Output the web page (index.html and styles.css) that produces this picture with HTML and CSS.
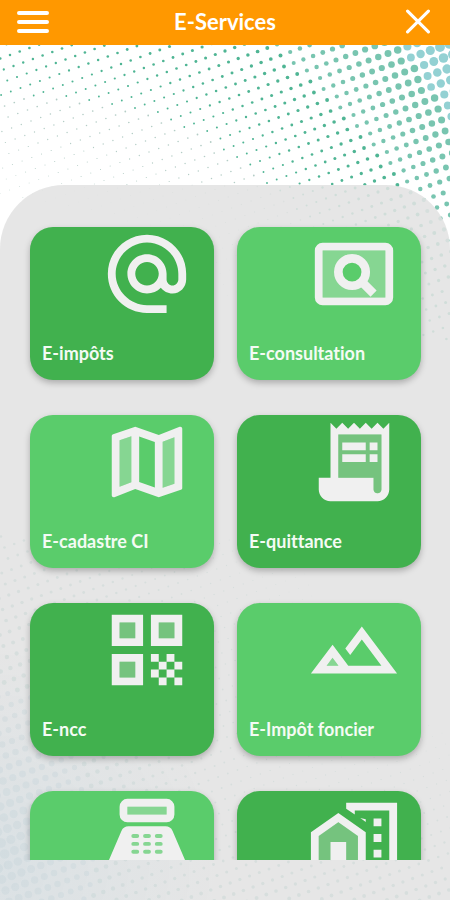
FILE: index.html
```html
<!DOCTYPE html>
<html lang="fr">
<head>
  <meta charset="UTF-8" />
  <meta name="viewport" content="width=device-width, initial-scale=1" />
  <title>E-Services</title>
  <link rel="stylesheet" href="styles.css">
</head>
<body>
  <svg id="dots" class="dots" viewBox="0 0 450 900" preserveAspectRatio="xMaxYMin slice" aria-hidden="true"></svg>

  <header class="topbar">
    <button type="button" class="icon-btn" aria-label="Menu">
      <svg class="menu-icon" viewBox="0 0 34 24"><path d="M3 3h28M3 12h28M3 21h28" /></svg>
    </button>
    <h1>E-Services</h1>
    <button type="button" class="icon-btn" aria-label="Fermer">
      <svg class="close-icon" viewBox="0 0 24 24"><path d="M2 2l20 20M22 2L2 22" /></svg>
    </button>
  </header>

  <main class="panel">
    <nav class="services">
      <a href="#" class="card dark">
        <svg class="icon" viewBox="0 0 24 24"><path d="M12 1.95c-5.52 0-10 4.48-10 10s4.48 10 10 10h5v-2h-5c-4.34 0-8-3.66-8-8s3.66-8 8-8 8 3.66 8 8v1.43c0 .79-.71 1.57-1.5 1.57s-1.5-.78-1.5-1.57v-1.43c0-2.76-2.24-5-5-5s-5 2.24-5 5 2.24 5 5 5c1.38 0 2.64-.56 3.54-1.47.65.89 1.77 1.47 2.96 1.47 1.97 0 3.5-1.6 3.5-3.57v-1.43c0-5.52-4.48-10-10-10zm0 13c-1.66 0-3-1.34-3-3s1.34-3 3-3 3 1.34 3 3-1.34 3-3 3z" /></svg>
        <span>E-impôts</span>
      </a>
      <a href="#" class="card light">
        <svg class="icon" viewBox="0 0 24 24">
          <path class="tone" fill-rule="evenodd" d="M4 6h16v12H4zM11.5 8a3.5 3.5 0 1 0 0 7 3.5 3.5 0 0 0 0-7z" />
          <path fill-rule="evenodd" d="M4 4h16a2 2 0 0 1 2 2v12a2 2 0 0 1-2 2H4a2 2 0 0 1-2-2V6a2 2 0 0 1 2-2zM4 6v12h16V6z" />
          <circle class="lens" cx="11.5" cy="11.5" r="3.5" />
          <path class="lens" d="M14 14l3 3" />
        </svg>
        <span>E-consultation</span>
      </a>
      <a href="#" class="card light">
        <svg class="icon" viewBox="0 0 24 24">
          <path class="tone" d="M5 18.31l3-1.16V5.45L5 6.46zm11 .24l3-1.01V5.7l-3 1.16z" />
          <path d="M20.5 3l-.16.03L15 5.1 9 3 3.36 4.9c-.21.07-.36.25-.36.48V20.5c0 .28.22.5.5.5l.16-.03L9 18.9l6 2.1 5.64-1.9c.21-.07.36-.25.36-.48V3.5c0-.28-.22-.5-.5-.5zM8 17.15l-3 1.16V6.46l3-1.01v11.7zm6 1.38l-4-1.4V5.47l4 1.4v11.66zm5-.99l-3 1.01V6.86l3-1.16v11.84z" />
        </svg>
        <span>E-cadastre CI</span>
      </a>
      <a href="#" class="card dark">
        <svg class="icon" viewBox="0 0 24 24">
          <path class="tone" d="M8 5v11h9v3c0 .55.45 1 1 1s1-.45 1-1V5H8z" />
          <path fill-rule="evenodd" d="M19.5 3.5L18 2l-1.5 1.5L15 2l-1.5 1.5L12 2l-1.5 1.5L9 2 7.5 3.5 6 2v14H3v3c0 1.66 1.34 3 3 3h12c1.66 0 3-1.34 3-3V2l-1.5 1.5zM19 19c0 .55-.45 1-1 1s-1-.45-1-1v-3H8V5h11v14z" />
          <path d="M9 7h6v2H9zM16 7h2v2h-2zM9 10h6v2H9zM16 10h2v2h-2z" />
        </svg>
        <span>E-quittance</span>
      </a>
      <a href="#" class="card dark">
        <svg class="icon" viewBox="0 0 24 24">
          <path class="tone" d="M5 5h4v4H5zM15 5h4v4h-4zM5 15h4v4H5z" />
          <path fill-rule="evenodd" d="M3 3h8v8H3zM5 5v4h4V5zM13 3h8v8h-8zM15 5v4h4V5zM3 13h8v8H3zM5 15v4h4v-4z" />
          <path d="M13 13h2v2h-2zM17 13h2v2h-2zM15 15h2v2h-2zM19 15h2v2h-2zM13 17h2v2h-2zM17 17h2v2h-2zM15 19h2v2h-2zM19 19h2v2h-2z" />
        </svg>
        <span>E-ncc</span>
      </a>
      <a href="#" class="card light">
        <svg class="icon" viewBox="0 0 24 24">
          <path class="tone" d="M5 16h3.04l-1.52-2.03z" />
          <path d="M14 6l-4.22 5.63 1.25 1.67L14 9.33 19 16h-8.46l-4.01-5.37L1 18h22L14 6zM5 16l1.52-2.03L8.04 16H5z" />
        </svg>
        <span>E-Impôt foncier</span>
      </a>
      <a href="#" class="card light" aria-label="Caisse">
        <svg class="icon" viewBox="0 0 24 24">
          <path class="tone" d="M7 4h10v2H7zM7.5 10.8h9v5.4h-9z" />
          <path fill-rule="evenodd" d="M7 2h10a2 2 0 0 1 2 2v2a2 2 0 0 1-2 2H7a2 2 0 0 1-2-2V4a2 2 0 0 1 2-2zM7 4v2h10V4z" />
          <path fill-rule="evenodd" d="M7.3 9h9.4a2 2 0 0 1 1.83 1.19L22.3 19v3H1.7v-3l3.77-8.81A2 2 0 0 1 7.3 9zM8.5 11a.5.5 0 0 0 0 1h1a.5.5 0 0 0 0-1zM11.5 11a.5.5 0 0 0 0 1h1a.5.5 0 0 0 0-1zM14.5 11a.5.5 0 0 0 0 1h1a.5.5 0 0 0 0-1zM8.5 13a.5.5 0 0 0 0 1h1a.5.5 0 0 0 0-1zM11.5 13a.5.5 0 0 0 0 1h1a.5.5 0 0 0 0-1zM14.5 13a.5.5 0 0 0 0 1h1a.5.5 0 0 0 0-1zM8.5 15a.5.5 0 0 0 0 1h1a.5.5 0 0 0 0-1zM11.5 15a.5.5 0 0 0 0 1h1a.5.5 0 0 0 0-1zM14.5 15a.5.5 0 0 0 0 1h1a.5.5 0 0 0 0-1z" />
        </svg>
      </a>
      <a href="#" class="card dark" aria-label="Immobilier">
        <svg class="icon" viewBox="0 0 24 24">
          <path class="tone" d="M8 8l-5 3.4V19h10v-7.6z" />
          <path d="M8 5.6l-7 4.9V21h2v-9.5l5-3.5 5 3.5V21h2V10.5zM6 13h4v8H6z" />
          <path d="M10 3v1.5l2.2 1.5V5H21v16h2V3zM13.6 6.9L15 7.9v-.7zM17 7h2v2h-2zM17 11h2v2h-2zM17 15h2v2h-2z" />
        </svg>
      </a>
    </nav>
  </main>

  <script src="script.js"></script>
</body>
</html>
```

FILE: styles.css
```css
* {
  box-sizing: border-box;
}

body {
  margin: 0;
  height: 100vh;
  display: flex;
  flex-direction: column;
  background: #fff;
  font-family: Lato, "Open Sans", sans-serif;
  font-variant-ligatures: none;
  overflow: hidden;
}

.dots {
  position: absolute;
  top: 0;
  left: 0;
  width: 100%;
  height: 100%;
  z-index: -1;
}

.topbar {
  display: flex;
  align-items: center;
  justify-content: space-between;
  height: 45px;
  padding: 0 16px 2px;
  background: #ff9800;
  color: #fff;
}

.topbar h1 {
  margin: 0;
  font-size: 22px;
  line-height: 28px;
  font-weight: 700;
}

.icon-btn {
  display: flex;
  align-items: center;
  width: 36px;
  height: 36px;
  padding: 0;
  border: none;
  background: none;
  cursor: pointer;
}

.icon-btn svg {
  fill: none;
  stroke: #fff;
  stroke-linecap: round;
}

.icon-btn:last-child {
  justify-content: flex-end;
}

.menu-icon {
  width: 34px;
  height: 24px;
  stroke-width: 4;
}

.close-icon {
  width: 32px;
  height: 25px;
  stroke-width: 3;
}

.panel {
  flex: 1;
  min-height: 0;
  display: flex;
  margin-top: 140px;
  padding: 20px 0 40px;
  border-radius: 64px 64px 0 0;
  background:
    radial-gradient(circle at 0 95%, rgba(195, 215, 224, 0.35), transparent 220px),
    rgba(226, 226, 226, 0.88);
}

.services {
  flex: 1;
  display: grid;
  grid-template-columns: 1fr 1fr;
  grid-auto-rows: 153px;
  gap: 35px 23px;
  padding: 22px 29px 22px 30px;
  overflow-y: auto;
  scrollbar-width: none;
}

.card {
  display: flex;
  flex-direction: column;
  justify-content: space-between;
  padding: 0 12px 16px;
  border-radius: 23px;
  box-shadow: 0 3px 6px rgba(0, 0, 0, 0.25);
  color: #f4fbf4;
  font-size: 18px;
  line-height: 22px;
  font-weight: 700;
  text-decoration: none;
}

.dark {
  background: #41b14e;
}

.light {
  background: #5acc6b;
}

.icon {
  width: 94px;
  height: 94px;
  margin-right: 8px;
  align-self: flex-end;
  fill: #f0f0f0;
}

.tone {
  opacity: 0.3;
}

.lens {
  fill: none;
  stroke: #f0f0f0;
  stroke-width: 2.2;
}
```

FILE: script.js
```js
const svg = document.getElementById("dots");

// dot radius: big in the top right corner and at the bottom left, fading out between
function radius(x, y) {
  if (y < 420) {
    const corner = 5 * Math.exp(-(450 - x) * 0.0072 - (y - 45) * 0.0045);
    const left = 1.2 * Math.exp(-(y - 45) / 110) * (1 - x / 600);
    return corner + left;
  }
  const bottom = 5 * Math.exp(-Math.hypot(x, (y - 850) * 0.6) / 140);
  const floor = 2 * Math.exp((y - 900) / 110);
  return Math.max(bottom, floor);
}

function color(r, y) {
  if (y > 420) return r > 2.5 ? "#9cc3cf" : "#86bdb2";
  if (r > 3.8) return "#93d1d3";
  if (r > 2) return "#78c5b0";
  if (r > 0.9) return "#4fb594";
  return "#b4cdc6";
}

let html = "";
for (let i = -60; i < 100; i++) {
  for (let j = -60; j < 120; j++) {
    const x = 10 + i * 9.7 + j * 3.5;
    const y = 55 - i * 3.5 + j * 11;
    if (x < -5 || x > 455 || y < 40 || y > 905) continue;
    if (y > 340 && y < 535) continue;
    const r = radius(x, y);
    if (r < 0.4) continue;
    html += `<circle cx="${x.toFixed(1)}" cy="${y.toFixed(1)}" r="${r.toFixed(2)}" fill="${color(r, y)}" />`;
  }
}
svg.innerHTML = html;
```
